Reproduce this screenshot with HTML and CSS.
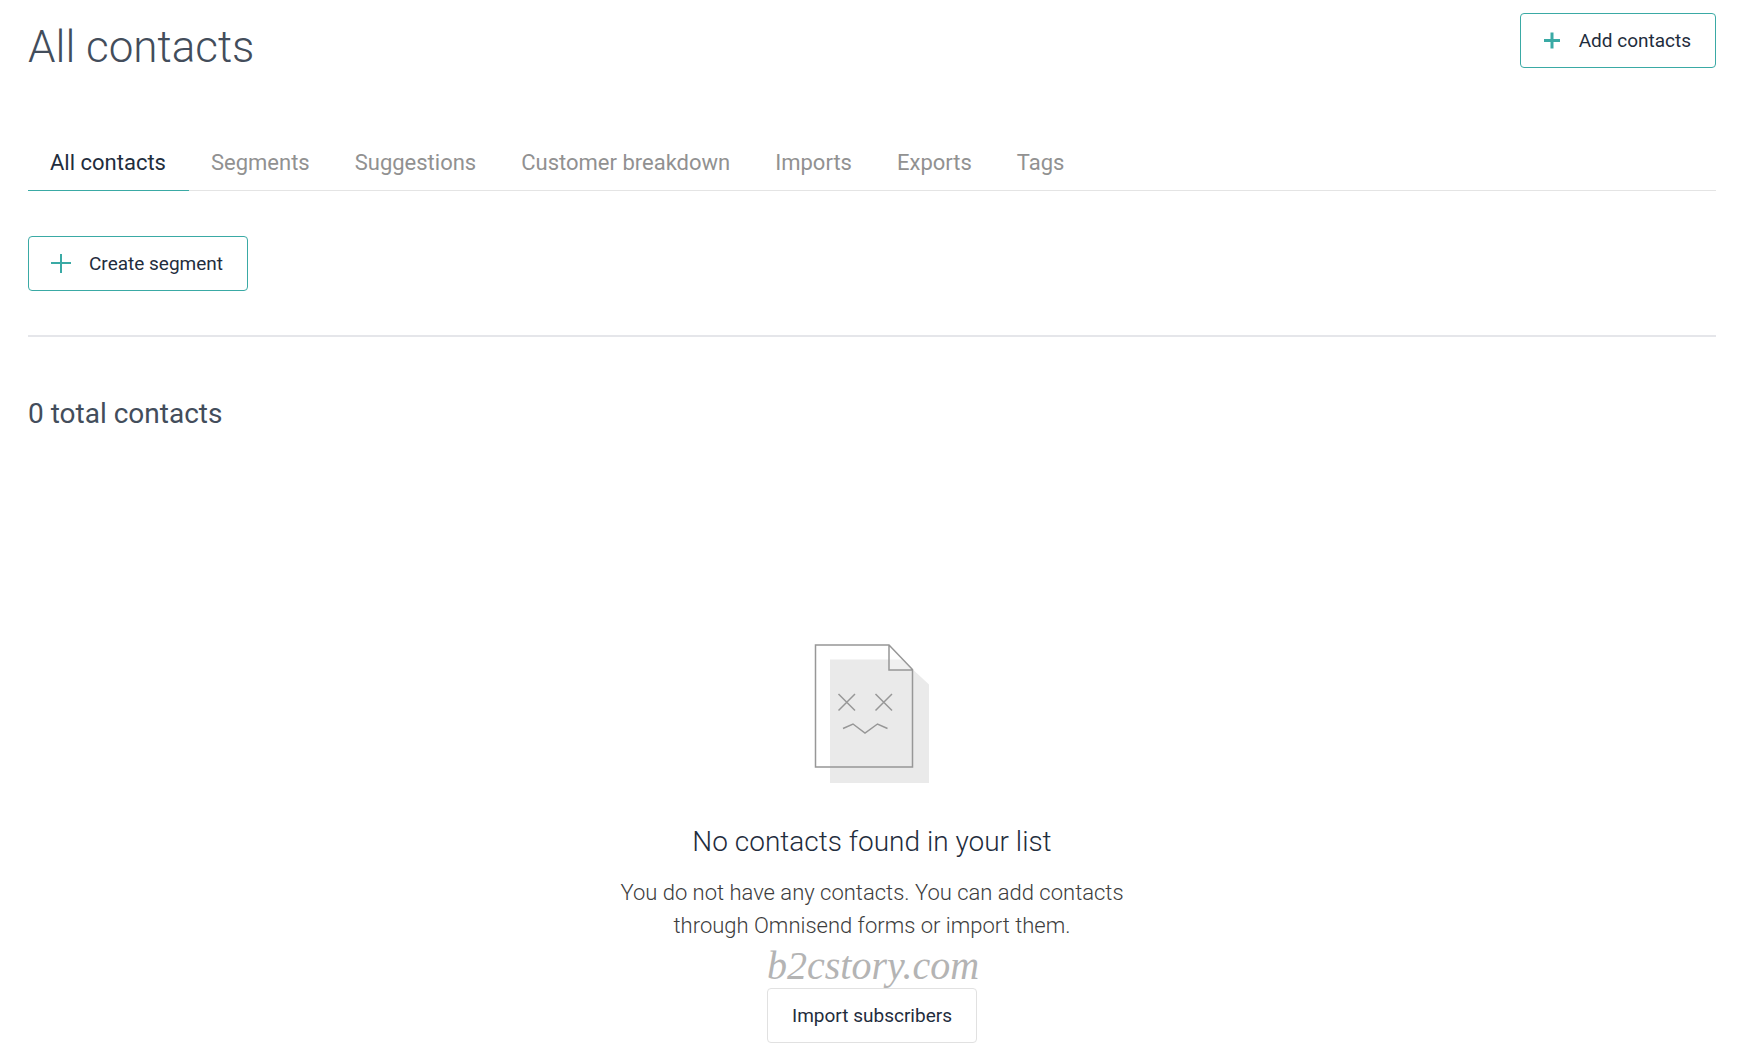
FILE: index.html
```html
<!DOCTYPE html>
<html lang="en">
<head>
<meta charset="utf-8">
<meta name="viewport" content="width=device-width, initial-scale=1">
<title>All contacts</title>
<link rel="stylesheet" href="styles.css">
</head>
<body>
<main class="page">
  <header class="page-header">
    <h1 class="page-title">All contacts</h1>
    <button class="button button-accent" type="button">
      <svg class="icon" width="18" height="20" viewBox="0 0 18 20" aria-hidden="true"><path d="M1 9.500h16M9 1.500v16" fill="none" stroke="#3aaaa5" stroke-width="3"/></svg>
      Add contacts
    </button>
  </header>

  <nav class="tabs" aria-label="Contacts">
    <a class="tab tab-active" href="#all" aria-current="page">All contacts</a>
    <a class="tab" href="#segments">Segments</a>
    <a class="tab" href="#suggestions">Suggestions</a>
    <a class="tab" href="#breakdown">Customer breakdown</a>
    <a class="tab" href="#imports">Imports</a>
    <a class="tab" href="#exports">Exports</a>
    <a class="tab" href="#tags">Tags</a>
  </nav>

  <section class="toolbar">
    <button class="button button-accent" type="button">
      <svg class="icon" width="20" height="20" viewBox="0 0 20 20" aria-hidden="true"><path d="M0 9h20M10 -1v20" fill="none" stroke="#3aaaa5" stroke-width="2"/></svg>
      Create segment
    </button>
  </section>

  <h2 class="total">0 total contacts</h2>

  <section class="empty">
    <svg class="empty-art" width="116" height="140" viewBox="0 0 116 140" aria-hidden="true">
      <path d="M16 15.500H88L115 40.500V139H16Z" fill="#eaeaea"/>
      <path d="M75 1V26H98Z" fill="#fff" fill-opacity=".3"/>
      <g fill="none" stroke="#979797" stroke-width="1.500">
        <path d="M1.500 1H75L98.500 25.500V123H1.500ZM75 1V26H98.500"/>
        <path d="M24.500 50L41 66.500M41 50L24.500 66.500M61.500 50L78 66.500M78 50L61.500 66.500M29 84.500L39 80L51 89L63.500 80L73.500 84.500"/>
      </g>
    </svg>
    <h3 class="empty-title">No contacts found in your list</h3>
    <p class="empty-text">You do not have any contacts. You can add contacts through Omnisend forms or import them.</p>
    <div class="empty-action">
      <span class="site-mark">b2cstory.com</span>
      <button class="button" type="button">Import subscribers</button>
    </div>
  </section>
</main>
</body>
</html>
```
FILE: styles.css
```css
* {
  box-sizing: border-box;
}

body {
  margin: 0;
  background: #fff;
  color: #1f2d3d;
  font-family: Roboto, sans-serif;
}

h1,
h2,
h3,
p {
  margin: 0;
}

.page {
  padding: 13px 31px 16px 28px;
}

.page-header {
  display: flex;
  justify-content: space-between;
  align-items: flex-start;
}

.page-title {
  padding-top: 8px;
  color: #434d5b;
  font-size: 44px;
  font-weight: 300;
  line-height: 52px;
}

.button {
  display: inline-flex;
  align-items: center;
  gap: 18px;
  height: 55px;
  padding: 0 24px;
  border: 1px solid #e1e1e1;
  border-radius: 4px;
  background: #fff;
  color: #1f2d3d;
  font-family: inherit;
  font-size: 19px;
  line-height: 24px;
  white-space: nowrap;
}

.button-accent {
  padding-left: 22px;
  border-color: #3aaaa5;
}

.icon {
  flex: none;
}

.tabs {
  display: flex;
  margin-top: 68px;
  box-shadow: inset 0 -1px #e4e4e4;
}

.tab {
  padding: 8px 23px 14px 22px;
  border-bottom: 1px solid transparent;
  color: #919191;
  font-size: 22px;
  line-height: 27px;
  text-decoration: none;
}

.tab-active {
  border-color: #3aaaa5;
  color: #1f2d3d;
}

.toolbar {
  display: flex;
  padding: 45px 0 44px;
  border-bottom: 2px solid #e5e6ea;
}

.total {
  margin-top: 60px;
  color: #434d5b;
  font-size: 28px;
  font-weight: 400;
  line-height: 34px;
}

.empty {
  display: flex;
  flex-direction: column;
  align-items: center;
  margin-top: 213px;
  text-align: center;
}

.empty-title {
  margin-top: 40px;
  font-size: 28px;
  font-weight: 300;
  line-height: 36px;
}

.empty-text {
  max-width: 534px;
  margin-top: 16px;
  color: #3d3d3d;
  font-size: 22px;
  font-weight: 300;
  line-height: 33px;
}

.empty-action {
  position: relative;
  margin-top: 46px;
}

.site-mark {
  position: absolute;
  bottom: 100%;
  left: 0;
  color: #b4b4b4;
  font-family: "Liberation Serif", serif;
  font-size: 40px;
  font-style: italic;
  line-height: 44px;
}
```
